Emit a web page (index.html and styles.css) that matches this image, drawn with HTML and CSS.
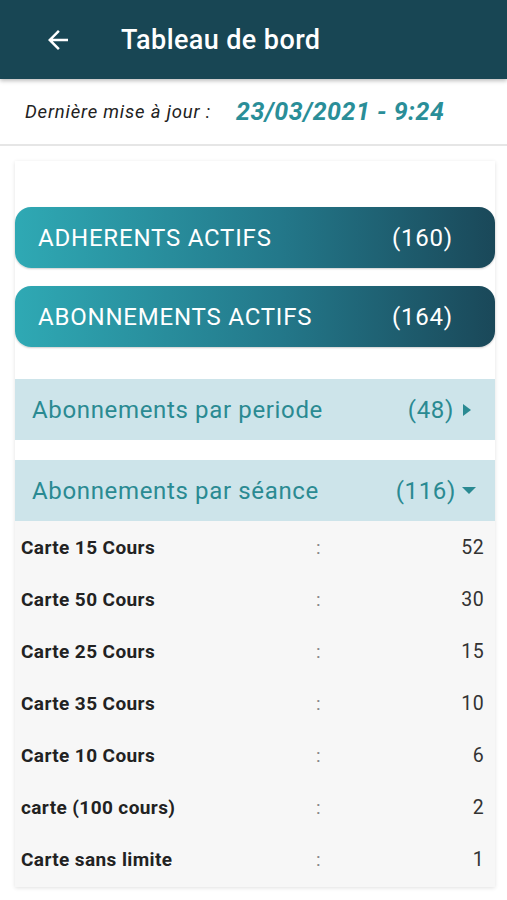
FILE: index.html
```html
<!DOCTYPE html>
<html lang="fr">
<head>
    <meta charset="UTF-8">
    <meta name="viewport" content="width=device-width, initial-scale=1.0">
    <title>Tableau de bord</title>
    <link rel="stylesheet" href="styles.css">
</head>
<body>
    <header class="topbar">
        <svg class="back" width="30" height="30" viewBox="0 0 24 24">
            <path d="M20 11H7.83l5.59-5.59L12 4l-8 8 8 8 1.41-1.41L7.83 13H20v-2z" fill="#fff"/>
        </svg>
        <h1>Tableau de bord</h1>
    </header>

    <div class="update">
        <span class="update-label">Dernière mise à jour :</span>
        <span class="update-date">23/03/2021 - 9:24</span>
    </div>

    <section class="card">
        <div class="pill">
            <span>ADHERENTS ACTIFS</span>
            <span>(160)</span>
        </div>
        <div class="pill">
            <span>ABONNEMENTS ACTIFS</span>
            <span>(164)</span>
        </div>

        <div class="group first">
            <span>Abonnements par periode</span>
            <span class="count">(48) <span class="tri-right"></span></span>
        </div>

        <div class="group">
            <span>Abonnements par séance</span>
            <span class="count">(116) <span class="tri-down"></span></span>
        </div>
        <ul class="list">
            <li><b>Carte 15 Cours</b><span class="colon">:</span><span class="val">52</span></li>
            <li><b>Carte 50 Cours</b><span class="colon">:</span><span class="val">30</span></li>
            <li><b>Carte 25 Cours</b><span class="colon">:</span><span class="val">15</span></li>
            <li><b>Carte 35 Cours</b><span class="colon">:</span><span class="val">10</span></li>
            <li><b>Carte 10 Cours</b><span class="colon">:</span><span class="val">6</span></li>
            <li><b>carte (100 cours)</b><span class="colon">:</span><span class="val">2</span></li>
            <li><b>Carte sans limite</b><span class="colon">:</span><span class="val">1</span></li>
        </ul>
    </section>
</body>
</html>
```

FILE: styles.css
```css
body {
    margin: 0;
    font-family: Roboto, "Noto Sans", sans-serif;
    background: #fff;
    height: 900px;
    overflow: hidden;
}

.topbar {
    height: 79px;
    background: #184654;
    display: flex;
    align-items: center;
    padding-left: 43px;
    box-shadow: 0 2px 4px rgba(0, 0, 0, 0.25);
    position: relative;
}
.back {
    margin-right: 48px;
}
.topbar h1 {
    margin: 0;
    color: #fff;
    font-size: 27px;
    font-weight: 500;
    letter-spacing: 0.4px;
}

.update {
    height: 65px;
    display: flex;
    align-items: center;
    padding-left: 25px;
    border-bottom: 2px solid #e6e6e6;
}
.update-label {
    font-style: italic;
    font-size: 18.5px;
    letter-spacing: 0.8px;
    color: #222;
    width: 211px;
}
.update-date {
    font-style: italic;
    font-weight: bold;
    font-size: 25px;
    letter-spacing: 0.5px;
    color: #2a8e98;
}

.card {
    margin: 15px 12px 0 15px;
    padding-top: 46px;
    background: #fff;
    box-shadow: 0 1px 4px rgba(0, 0, 0, 0.12);
}

.pill {
    height: 61px;
    border-radius: 16px;
    background: linear-gradient(to right, #2fa9b4, #23788a 55%, #1a4859);
    color: #fff;
    font-size: 24px;
    letter-spacing: 0.8px;
    display: flex;
    align-items: center;
    justify-content: space-between;
    padding: 0 42px 0 23px;
    margin-bottom: 18px;
    box-shadow: 0 1px 2px rgba(0, 0, 0, 0.2);
}

.group {
    height: 61px;
    background: #cde4ea;
    color: #2a8a92;
    font-size: 24px;
    letter-spacing: 0.65px;
    display: flex;
    align-items: center;
    justify-content: space-between;
    padding: 0 24px 0 17px;
    margin-top: 20px;
}
.group.first {
    margin-top: 32px;
}
.count {
    display: flex;
    align-items: center;
    gap: 6px;
}
.tri-right {
    width: 0;
    height: 0;
    border-top: 6px solid transparent;
    border-bottom: 6px solid transparent;
    border-left: 8px solid #2a8a92;
    margin-left: 3px;
}
.tri-down {
    width: 0;
    height: 0;
    border-left: 7px solid transparent;
    border-right: 7px solid transparent;
    border-top: 7px solid #2a8a92;
    margin-right: -5px;
}

.list {
    list-style: none;
    margin: 0;
    padding: 0 11px 2px 6px;
    background: #f7f7f7;
}
.list li {
    height: 52px;
    display: flex;
    align-items: center;
    font-size: 19px;
    letter-spacing: 0.4px;
    color: #222;
}
.list b {
    width: 295px;
}
.colon {
    color: #888;
    flex: 1;
}
.val {
    color: #333;
    font-size: 19.5px;
}
```
